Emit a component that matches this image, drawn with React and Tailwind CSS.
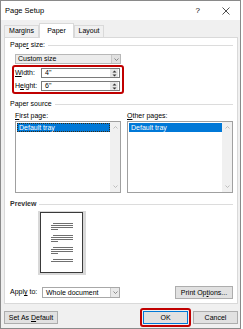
import React from 'react';

function Chevron({ up = false }) {
  return (
    <svg width="5" height="3" viewBox="0 0 5 3">
      <path
        d={up ? 'M0.5 2.5L2.5 0.5L4.5 2.5' : 'M0.5 0.5L2.5 2.5L4.5 0.5'}
        fill="none"
        stroke="currentColor"
        strokeWidth="0.8"
      />
    </svg>
  );
}

function Heading({ children }) {
  return (
    <div className="flex items-center h-[8px] leading-[8px]">
      <span>{children}</span>
      <div className="flex-1 h-px bg-[#dcdcdc] ml-[3px]" />
    </div>
  );
}

function Dropdown({ value, width }) {
  return (
    <div className={`${width} h-[11px] flex border border-[#a8a8a8] bg-white`}>
      <div className="flex-1 pl-[3px] leading-[9px]">{value}</div>
      <div className="w-[9px] border-l border-[#c8c8c8] bg-[#e8e8e8] flex items-center justify-center text-[#707070]">
        <Chevron />
      </div>
    </div>
  );
}

function Spinner() {
  return (
    <div className="w-[8px] h-[8px] bg-[#e6e6e6] flex items-center justify-center mr-px">
      <svg width="5" height="7" viewBox="0 0 5 7">
        <path d="M2.5 0.5L4.5 2.6H0.5Z" fill="#333" />
        <path d="M2.5 6.5L4.5 4.4H0.5Z" fill="#333" />
      </svg>
    </div>
  );
}

function NumberField({ label, value }) {
  return (
    <div className="flex items-center h-[10px]">
      <div className="w-[27px] pl-px leading-[10px]">{label}</div>
      <div className="w-[79px] h-[10px] border border-[#7a7a7a] bg-white flex items-center">
        <span className="flex-1 pl-[3px] leading-[8px]">{value}</span>
        <Spinner />
      </div>
    </div>
  );
}

function TrayList({ focused }) {
  return (
    <div className="h-[72px] border border-[#a0a0a0] bg-white flex">
      <div className="flex-1 pt-px pl-px">
        <div
          className={`h-[9px] bg-[#0078d7] text-white leading-[7px] pl-px border ${
            focused ? 'border-dotted border-[#3a2a10]' : 'border-[#0078d7]'
          }`}
        >
          Default tray
        </div>
      </div>
      <div className="w-[10px] bg-[#f0f0f0] flex flex-col items-center justify-between py-[4px] text-[#b0b0b0]">
        <Chevron up />
        <Chevron />
      </div>
    </div>
  );
}

function Para({ lines }) {
  return (
    <div className="flex flex-col gap-px">
      {lines.map((w, i) => (
        <div key={i} className={`h-px bg-[#707070] ${w}`} />
      ))}
    </div>
  );
}

function Button({ children, className = '' }) {
  return (
    <div
      className={`h-[13px] border border-[#adadad] bg-[#e1e1e1] flex items-center justify-center leading-[11px] ${className}`}
    >
      <span>{children}</span>
    </div>
  );
}

export default function App() {
  return (
    <div className="w-[243px] h-[329px] bg-white font-['Liberation_Sans',Arial,sans-serif] text-[7px] text-black">
      <div className="w-[241px] h-[329px] border border-[#8a8a8a] flex flex-col">
        {/* title bar */}
        <div className="h-[19px] bg-white flex items-center pl-[4px]">
          <span className="flex-1 text-[7.5px]">Page Setup</span>
          <span className="text-[8px] mr-[22px]">?</span>
          <svg width="8" height="8" viewBox="0 0 8 8" className="mr-[10px]">
            <path d="M0.5 0.5L7.5 7.5M7.5 0.5L0.5 7.5" stroke="#222" strokeWidth="0.8" />
          </svg>
        </div>

        <div className="flex-1 bg-[#f0f0f0] flex flex-col pt-[3px] pl-[3px] pr-[2px]">
          {/* tabs */}
          <div className="flex items-end h-[14px]">
            <div className="w-[35px] h-[12px] border border-b-0 border-[#d9d9d9] flex items-center justify-center">
              Margins
            </div>
            <div className="w-[35px] h-[15px] -mb-px bg-white border border-b-0 border-[#d9d9d9] flex items-center justify-center relative z-10">
              Paper
            </div>
            <div className="w-[30px] h-[12px] border border-b-0 border-[#d9d9d9] flex items-center justify-center">
              Layout
            </div>
          </div>

          {/* panel */}
          <div className="w-[234px] h-[267px] border border-[#d9d9d9] bg-white pl-[5px] pr-[4px] flex flex-col">
            <div className="mt-[3px]">
              <Heading>
                Pape<u className="underline-offset-1">r</u> size:
              </Heading>
            </div>
            <div className="mt-[5px] ml-[5px]">
              <div className="w-[106px] h-[10px] flex border border-[#b8b8b8] bg-[#ececec]">
                <div className="flex-1 pl-[2px] leading-[8px]">Custom size</div>
                <div className="w-[9px] border-l border-[#c8c8c8] bg-[#e0e0e0] flex items-center justify-center text-[#707070]">
                  <Chevron />
                </div>
              </div>
            </div>
            <div className="mt-px ml-[2px] w-[112px] h-[29px] border-2 border-[#c00000] rounded-[3px] pt-px flex flex-col gap-[3px]">
              <NumberField
                label={
                  <>
                    <u className="underline-offset-1">W</u>idth:
                  </>
                }
                value={'4"'}
              />
              <NumberField
                label={
                  <>
                    H<u className="underline-offset-1">e</u>ight:
                  </>
                }
                value={'6"'}
              />
            </div>

            <div className="mt-[6px]">
              <Heading>Paper source</Heading>
            </div>
            <div className="mt-[4px] ml-[5px] grid grid-cols-2 gap-x-[6px] w-[218px]">
              <div className="h-[8px] leading-[8px]">
                <u className="underline-offset-1">F</u>irst page:
              </div>
              <div className="h-[8px] leading-[8px]">
                <u className="underline-offset-1">O</u>ther pages:
              </div>
              <div className="mt-px">
                <TrayList focused />
              </div>
              <div className="mt-px">
                <TrayList />
              </div>
            </div>

            <div className="mt-[7px]">
              <Heading>
                <span className="font-semibold text-[#333]">Preview</span>
              </Heading>
            </div>
            <div className="mt-[3px] ml-[28px] self-start bg-[#d8d8d8] pl-[2px] pt-px pr-[3px] pb-[2px]">
              <div className="w-[43px] h-[61px] border border-[#3a3a3a] bg-white pt-[10px] pl-[10px]">
                <div className="w-[22px] flex flex-col gap-[5px]">
                  <Para lines={['ml-[2px]', 'w-full', 'w-full', 'w-[7px]']} />
                  <Para lines={['ml-[2px]', 'w-full', 'w-full', 'w-[7px]']} />
                  <Para lines={['ml-[2px]', 'w-full', 'w-full', 'w-[7px]']} />
                  <Para lines={['ml-[2px]', 'w-full']} />
                </div>
              </div>
            </div>

            <div className="mt-[12px] flex items-center h-[11px]">
              <div className="w-[32px]">
                Appl<u className="underline-offset-1">y</u> to:
              </div>
              <Dropdown value="Whole document" width="w-[78px]" />
              <div className="flex-1" />
              <Button className="w-[58px] h-[12px]">
                Print Op<u className="underline-offset-1">t</u>ions...
              </Button>
            </div>
          </div>

          {/* bottom buttons */}
          <div className="mt-[4px] h-[19px] flex items-center">
            <Button className="w-[54px]">
              Set As <u className="underline-offset-1">D</u>efault
            </Button>
            <div className="flex-1" />
            <div className="w-[51px] h-[19px] border-2 border-[#c00000] rounded-[3px] p-px">
              <div className="h-[13px] border border-[#0078d7] bg-[#e1e1e1] flex items-center justify-center leading-[11px]">
                OK
              </div>
            </div>
            <Button className="w-[45px] ml-[2px]">Cancel</Button>
          </div>
        </div>
      </div>
    </div>
  );
}
